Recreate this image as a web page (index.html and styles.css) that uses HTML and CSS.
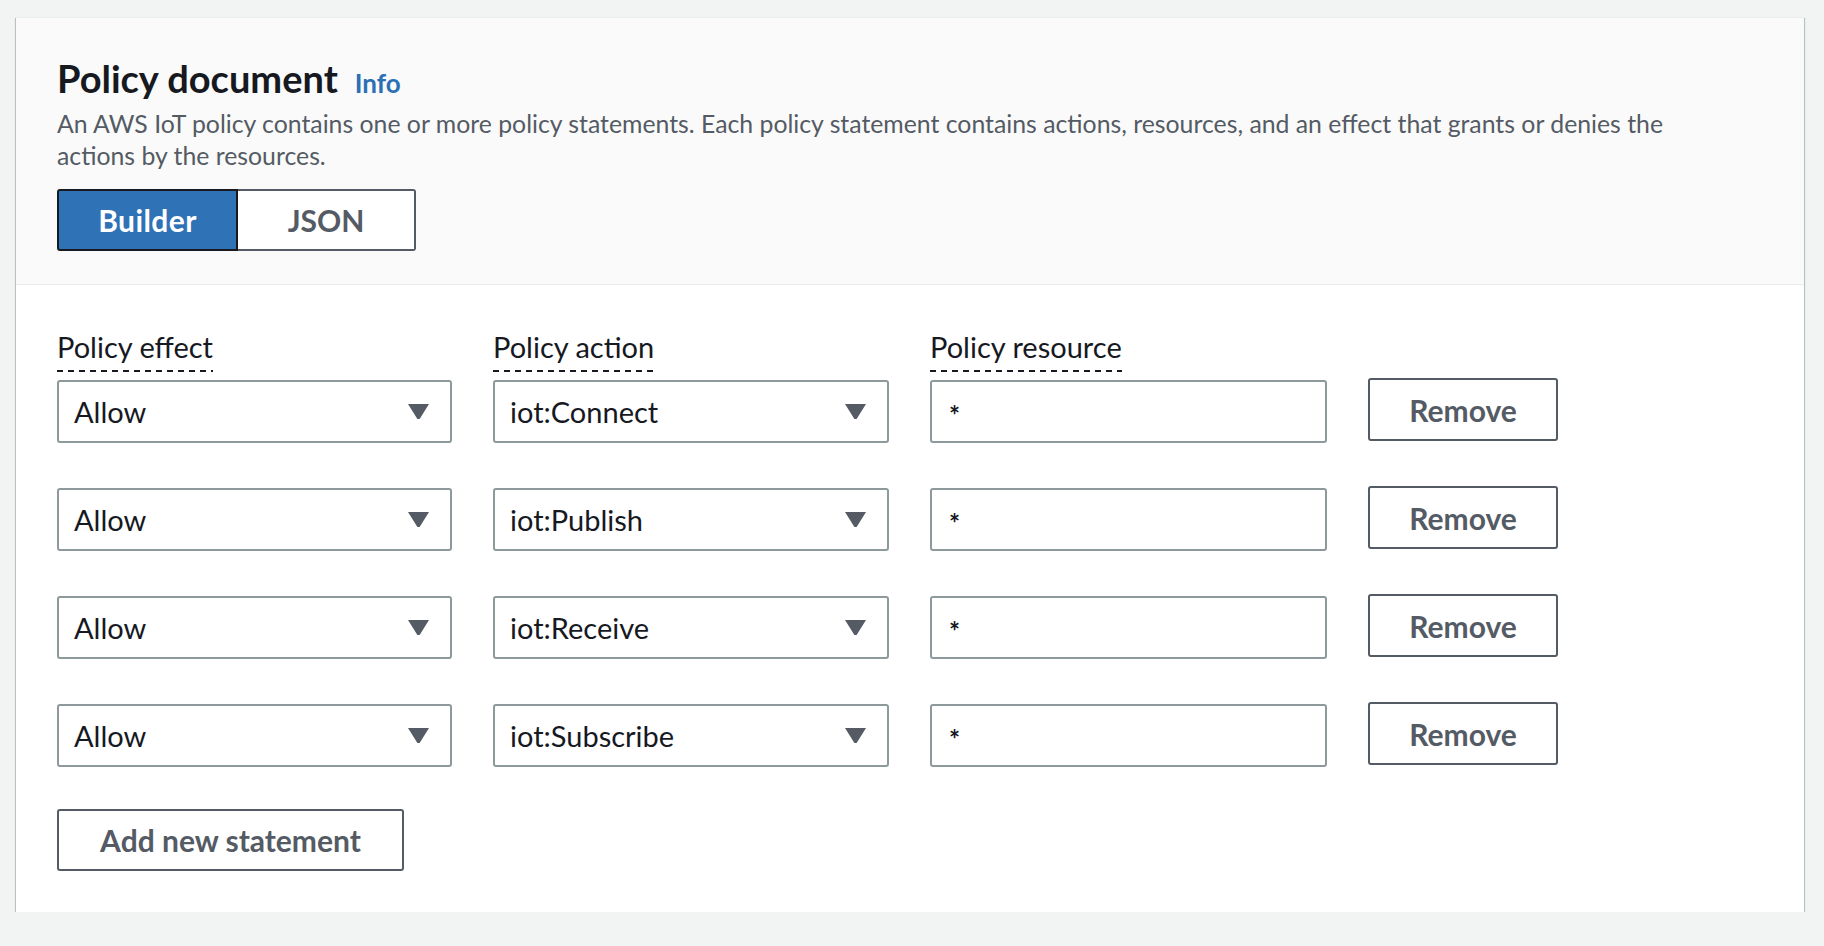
FILE: index.html
```html
<!DOCTYPE html>
<html lang="en">
<head>
<meta charset="utf-8">
<title>Policy document</title>
<link rel="stylesheet" href="styles.css">
</head>
<body>
<div class="card">
  <div class="card-header">
    <div class="title-row">
      <h2 class="title">Policy document</h2>
      <a class="info" href="#">Info</a>
    </div>
    <p class="desc">An AWS IoT policy contains one or more policy statements. Each policy statement contains actions, resources, and an effect that grants or denies the actions by the resources.</p>
    <div class="segmented">
      <button class="seg seg-active">Builder</button>
      <button class="seg">JSON</button>
    </div>
  </div>
  <div class="card-body">
    <div class="grid labels">
      <div><span class="label">Policy effect</span></div>
      <div><span class="label">Policy action</span></div>
      <div><span class="label">Policy resource</span></div>
      <div></div>
    </div>
    <div class="rows">
      <div class="grid row">
        <div class="select"><span>Allow</span><svg class="caret" width="21" height="15" viewBox="0 0 21 15"><polygon points="0,0 21,0 11.6,15 9.4,15"/></svg></div>
        <div class="select"><span>iot:Connect</span><svg class="caret" width="21" height="15" viewBox="0 0 21 15"><polygon points="0,0 21,0 11.6,15 9.4,15"/></svg></div>
        <div class="input"><span>*</span></div>
        <button class="btn btn-remove">Remove</button>
      </div>
      <div class="grid row">
        <div class="select"><span>Allow</span><svg class="caret" width="21" height="15" viewBox="0 0 21 15"><polygon points="0,0 21,0 11.6,15 9.4,15"/></svg></div>
        <div class="select"><span>iot:Publish</span><svg class="caret" width="21" height="15" viewBox="0 0 21 15"><polygon points="0,0 21,0 11.6,15 9.4,15"/></svg></div>
        <div class="input"><span>*</span></div>
        <button class="btn btn-remove">Remove</button>
      </div>
      <div class="grid row">
        <div class="select"><span>Allow</span><svg class="caret" width="21" height="15" viewBox="0 0 21 15"><polygon points="0,0 21,0 11.6,15 9.4,15"/></svg></div>
        <div class="select"><span>iot:Receive</span><svg class="caret" width="21" height="15" viewBox="0 0 21 15"><polygon points="0,0 21,0 11.6,15 9.4,15"/></svg></div>
        <div class="input"><span>*</span></div>
        <button class="btn btn-remove">Remove</button>
      </div>
      <div class="grid row">
        <div class="select"><span>Allow</span><svg class="caret" width="21" height="15" viewBox="0 0 21 15"><polygon points="0,0 21,0 11.6,15 9.4,15"/></svg></div>
        <div class="select"><span>iot:Subscribe</span><svg class="caret" width="21" height="15" viewBox="0 0 21 15"><polygon points="0,0 21,0 11.6,15 9.4,15"/></svg></div>
        <div class="input"><span>*</span></div>
        <button class="btn btn-remove">Remove</button>
      </div>
    </div>
    <button class="btn btn-add">Add new statement</button>
  </div>
</div>
</body>
</html>
```

FILE: styles.css
```css
* { box-sizing: border-box; }

html, body {
  margin: 0;
  padding: 0;
  background: #f2f3f3;
}

body {
  font-family: Lato, "Liberation Sans", sans-serif;
  color: #16191f;
  padding: 17px 20px 0 16px;
}

.card {
  background: #ffffff;
  box-shadow: 0 1px 1px 0 rgba(0, 28, 36, 0.35), 1px 1px 1px 0 rgba(0, 28, 36, 0.18), -1px 1px 1px 0 rgba(0, 28, 36, 0.18);
  border-top: 1px solid #eaeded;
}

.card-header {
  background: #fafafa;
  padding: 38px 41px 33px;
  border-bottom: 1px solid #eaeded;
}

.title-row {
  display: flex;
  align-items: baseline;
  gap: 17px;
}

.title {
  margin: 0;
  font-size: 38px;
  line-height: 44px;
  font-weight: 700;
  color: #16191f;
}

.info {
  font-size: 26px;
  font-weight: 700;
  color: #2b6fb4;
  text-decoration: none;
}

.desc {
  margin: 8px 0 0;
  max-width: 1640px;
  font-size: 24.8px;
  line-height: 32px;
  color: #545b64;
}

.segmented {
  display: flex;
  margin-top: 17px;
}

.seg {
  height: 62px;
  font-family: inherit;
  font-size: 30px;
  font-weight: 700;
  line-height: 36px;
  color: #545b64;
  background: #ffffff;
  border: 2px solid #545b64;
  border-left: 0;
  border-radius: 0 3px 3px 0;
  width: 178px;
  padding: 0;
}

.seg-active {
  width: 181px;
  color: #ffffff;
  background: #2f72b6;
  border: 2px solid #16191f;
  border-radius: 3px 0 0 3px;
  letter-spacing: 0.4px;
}

.card-body {
  padding: 44px 41px 41px;
}

.grid {
  display: grid;
  grid-template-columns: 395px 396px 397px 190px;
  column-gap: 41px;
}

.labels {
  margin-bottom: 8px;
}

.label {
  display: inline-block;
  font-size: 29px;
  line-height: 36px;
  padding-bottom: 5px;
  border-bottom: 2px solid transparent;
  background-image: repeating-linear-gradient(to right, #16191f 0 6px, transparent 6px 11px);
  background-size: 100% 2px;
  background-position: left bottom;
  background-origin: border-box;
  background-repeat: no-repeat;
}

.rows {
  display: flex;
  flex-direction: column;
  gap: 45px;
}

.row {
  align-items: start;
}

.select,
.input {
  height: 63px;
  display: flex;
  align-items: center;
  justify-content: space-between;
  border: 2px solid #8d999a;
  border-radius: 3px;
  background: #ffffff;
  padding: 0 21px 0 15px;
  font-size: 29px;
  line-height: 36px;
  color: #16191f;
}

.input {
  padding-left: 17px;
}

.input span {
  font-weight: 700;
  font-size: 26px;
  margin-top: 6px;
}

.caret {
  display: block;
  fill: #545b64;
}

.btn {
  height: 62px;
  font-family: inherit;
  font-size: 30px;
  font-weight: 700;
  line-height: 36px;
  color: #545b64;
  background: #ffffff;
  border: 2px solid #545b64;
  border-radius: 3px;
  padding: 0;
}

.btn-remove {
  width: 190px;
  height: 63px;
  margin-top: -2px;
}

.btn-add {
  margin-top: 42px;
  width: 347px;
}
```
